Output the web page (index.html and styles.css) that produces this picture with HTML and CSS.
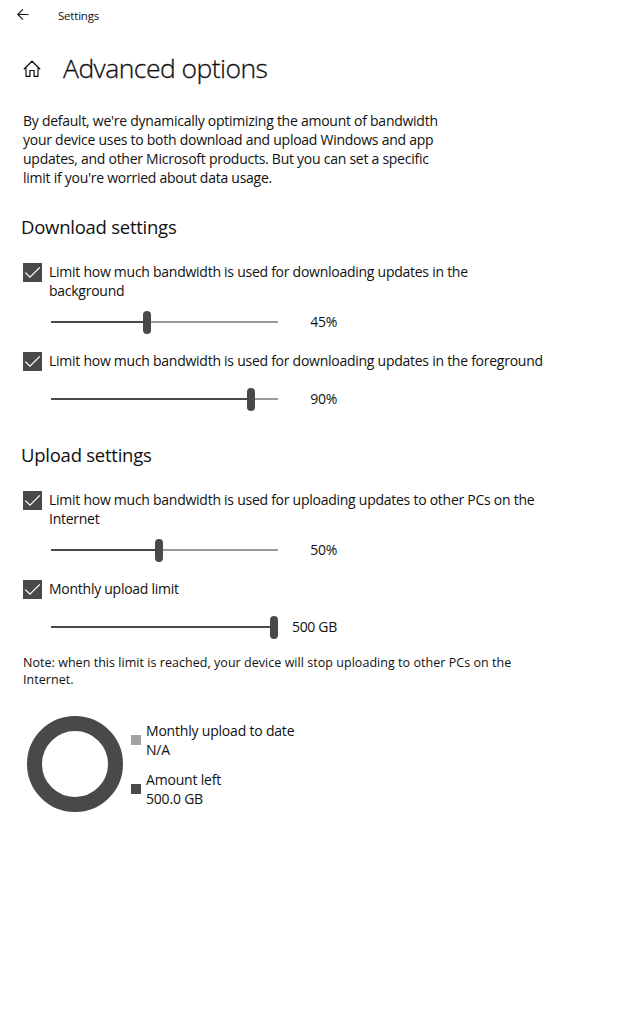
FILE: index.html
```html
<!DOCTYPE html>
<html lang="en">
<head>
<meta charset="utf-8">
<title>Settings</title>
<link rel="stylesheet" href="styles.css">
</head>
<body>
<svg class="defs" width="0" height="0"><defs>
<symbol id="check" viewBox="0 0 19 19"><path d="M2.3 9.6 7 14.2 16.8 4.4" fill="none" stroke="#fff" stroke-width="1.3"/></symbol>
</defs></svg>
<header class="titlebar">
  <svg class="back" viewBox="0 0 12 12"><path d="M11.5 5.500H.8M6 .4.8 5.500 6 10.600" fill="none" stroke="#111" stroke-width="1.1"/></svg>
  <span class="app-name">Settings</span>
</header>
<div class="heading">
  <svg class="home" viewBox="0 0 18 18"><path d="M.8 9.2 9 1.2l8.200 8M3 7.500V16.400H6.900V10.500h4.200v5.900H15V7.500" fill="none" stroke="#111" stroke-width="1.2"/></svg>
  <h1 class="title">Advanced options</h1>
</div>
<main class="content">
  <p class="intro">By default, we're dynamically optimizing the amount of bandwidth<br>your device uses to both download and upload Windows and app<br>updates, and other Microsoft products. But you can set a specific<br>limit if you're worried about data usage.</p>

  <h2 class="section download">Download settings</h2>
  <div class="option"><span class="box"><svg class="tick"><use href="#check"/></svg></span><span class="label">Limit how much bandwidth is used for downloading updates in the<br>background</span></div>
  <div class="slider-row"><div class="slider"><span class="fill" style="width:92px"></span><span class="thumb"></span><span class="rest"></span></div><span class="value">45%</span></div>
  <div class="option"><span class="box"><svg class="tick"><use href="#check"/></svg></span><span class="label">Limit how much bandwidth is used for downloading updates in the foreground</span></div>
  <div class="slider-row single"><div class="slider"><span class="fill" style="width:196px"></span><span class="thumb"></span><span class="rest"></span></div><span class="value">90%</span></div>

  <h2 class="section upload">Upload settings</h2>
  <div class="option"><span class="box"><svg class="tick"><use href="#check"/></svg></span><span class="label">Limit how much bandwidth is used for uploading updates to other PCs on the<br>Internet</span></div>
  <div class="slider-row"><div class="slider"><span class="fill" style="width:104px"></span><span class="thumb"></span><span class="rest"></span></div><span class="value">50%</span></div>
  <div class="option"><span class="box"><svg class="tick"><use href="#check"/></svg></span><span class="label">Monthly upload limit</span></div>
  <div class="slider-row single"><div class="slider"><span class="fill" style="width:219px"></span><span class="thumb"></span><span class="rest"></span></div><span class="value">500 GB</span></div>

  <p class="note">Note: when this limit is reached, your device will stop uploading to other PCs on the<br>Internet.</p>
  <div class="usage">
    <div class="ring"></div>
    <div class="legend">
      <div class="entry"><span class="swatch used"></span><span>Monthly upload to date<br>N/A</span></div>
      <div class="entry"><span class="swatch left"></span><span>Amount left<br>500.0 GB</span></div>
    </div>
  </div>
</main>
</body>
</html>
```
FILE: styles.css
```css
* { box-sizing: border-box; }
body { margin: 0; min-height: 1022px; background: #fff; color: #111; font: 14px/19px "Open Sans", "Noto Sans", sans-serif; white-space: nowrap; }
h1, h2, p { margin: 0; font-weight: 400; }
svg { flex: none; }
.defs { display: block; height: 0; }
.titlebar { display: flex; height: 32px; padding: 8px 0 0 17px; }
.back { width: 12px; height: 12px; margin-top: 1px; }
.app-name { margin-left: 29px; font-size: 11.500px; line-height: 15px; letter-spacing: -0.2px; }
.heading { display: flex; height: 79px; padding: 18px 0 0 23px; }
.home { width: 18px; height: 18px; margin-top: 10px; }
.title { margin-left: 22px; font-size: 26.500px; font-weight: 300; line-height: 36px; letter-spacing: -0.54px; -webkit-text-stroke: 0.3px #111; }
.content { padding-left: 23px; }
.intro { letter-spacing: -0.26px; }
.section { margin-left: -2px; font-size: 18.500px; line-height: 26px; letter-spacing: -0.25px; }
.download { margin-top: 27px; margin-bottom: 23px; }
.upload { margin-top: 31px; margin-bottom: 23px; }
.option { display: flex; align-items: flex-start; letter-spacing: -0.26px; }
.box { display: flex; flex: none; width: 19px; height: 19px; margin-right: 7px; background: #4a4947; }
.label { margin: -1px 0 1px; }
.tick { width: 19px; height: 19px; }
.slider-row { display: flex; align-items: center; justify-content: space-between; width: 314px; height: 24px; margin: 9px 0 18px; padding-left: 28px; }
.slider-row.single { margin: 16px 0 0; }
.slider { display: flex; align-items: center; width: 227px; }
.fill { height: 2px; background: #4a4947; }
.thumb { width: 8px; height: 23px; border-radius: 4px; background: #4a4947; }
.rest { flex: 1; height: 2px; background: #999; }
.value { margin-bottom: 2px; letter-spacing: -0.3px; }
.note { margin-top: 15px; font-size: 12.500px; line-height: 17px; letter-spacing: 0.04px; }
.usage { display: flex; margin-top: 28px; padding-left: 4px; }
.ring { width: 96px; height: 96px; border: 15px solid #4a4947; border-radius: 50%; }
.legend { display: grid; gap: 11px; align-content: start; margin: 5px 0 0 8px; }
.entry { display: flex; align-items: center; gap: 5px; letter-spacing: -0.2px; }
.swatch { width: 10px; height: 10px; }
.used { background: #a3a3a3; }
.left { background: #4a4947; }
```
